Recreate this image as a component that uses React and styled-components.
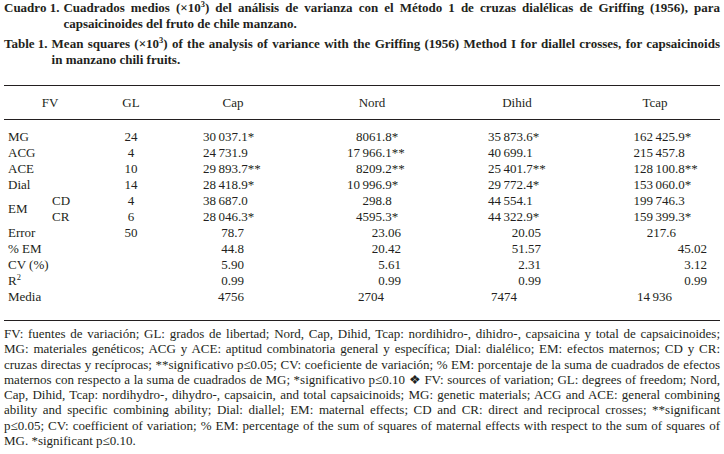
import React from "react";
import styled, { createGlobalStyle } from "styled-components";

const Global = createGlobalStyle`
  html, body { margin: 0; padding: 0; background: #fff; }
  body { font-family: "Liberation Serif", "DejaVu Serif", serif; color: #231f20; }
`;

const Page = styled.div`
  width: 724px;
  height: 454px;
  padding: 0 4px;
  box-sizing: border-box;
  overflow: hidden;
`;

const Caption = styled.div`
  display: flex;
  gap: 4px;
  font-weight: bold;
  font-size: 13px;
  line-height: 15.5px;
  margin-bottom: ${(p) => p.$mb}px;
`;

const CapLabel = styled.span`
  flex: none;
`;

const CapText = styled.div`
  flex: 1;
`;

const Line = styled.div`
  text-align: ${(p) => (p.$last ? "left" : "justify")};
  text-align-last: ${(p) => (p.$last ? "left" : "justify")};
`;

const Sup = styled.sup`
  font-size: 0.65em;
  vertical-align: 0.55em;
  line-height: 0;
`;

const Table = styled.div`
  margin-top: 18px;
  border-top: 1px solid #231f20;
  border-bottom: 1px solid #231f20;
  font-size: 13px;
`;

const Grid = styled.div`
  display: grid;
  grid-template-columns: 48px 44px 70px 134px 144px 146px 130px;
  grid-auto-rows: 16px;
  line-height: 16px;
`;

const Head = styled(Grid)`
  grid-auto-rows: 33px;
  line-height: 33px;
  border-bottom: 1px solid #231f20;
`;

const Body = styled(Grid)`
  padding: 9px 0 15px;
`;

const HeadCell = styled.div`
  text-align: center;
  grid-column: span ${(p) => p.$span || 1};
`;

const Label = styled.div`
  padding-left: 4px;
  white-space: nowrap;
  grid-column: span ${(p) => p.$span || 1};
  grid-row: span ${(p) => p.$rows || 1};
  align-self: center;
`;

const Sub = styled.div`
  padding-left: 0;
`;

const Center = styled.div`
  text-align: center;
`;

const DecCell = styled.div`
  white-space: nowrap;
`;

const Int = styled.span`
  display: inline-block;
  width: ${(p) => p.$w}px;
  text-align: right;
`;

const RightCell = styled.div`
  text-align: right;
  padding-right: ${(p) => p.$pr}px;
  white-space: nowrap;
`;

const Notes = styled.div`
  font-size: 13px;
  line-height: 15.3px;
  padding-top: 5px;
`;

const cols = [
  { name: "Cap", dec: 72, stat: 56, media: 56 },
  { name: "Nord", dec: 82, stat: 43, media: 60 },
  { name: "Dihid", dec: 79, stat: 49, media: 73 },
  { name: "Tcap", dec: 85, stat: [44, 13, 13, 13], media: 48 },
];

const T = "\u2009";

const rows = [
  { fv: "MG", gl: "24", v: [`30${T}037.1*`, "8061.8*", `35${T}873.6*`, `162${T}425.9*`] },
  { fv: "ACG", gl: "4", v: [`24${T}731.9`, `17${T}966.1**`, `40${T}699.1`, `215${T}457.8`] },
  { fv: "ACE", gl: "10", v: [`29${T}893.7**`, "8209.2**", `25${T}401.7**`, `128${T}100.8**`] },
  { fv: "Dial", gl: "14", v: [`28${T}418.9*`, `10${T}996.9*`, `29${T}772.4*`, `153${T}060.0*`] },
  { fv: "EM", sub: "CD", gl: "4", v: [`38${T}687.0`, "298.8", `44${T}554.1`, `199${T}746.3`] },
  { sub: "CR", gl: "6", v: [`28${T}046.3*`, "4595.3*", `44${T}322.9*`, `159${T}399.3*`] },
  { fv: "Error", gl: "50", kind: "stat", si: 0, v: ["78.7", "23.06", "20.05", "217.6"] },
  { fv: "% EM", kind: "stat", si: 1, v: ["44.8", "20.42", "51.57", "45.02"] },
  { fv: "CV (%)", kind: "stat", si: 2, v: ["5.90", "5.61", "2.31", "3.12"] },
  { fv: <>R<Sup>2</Sup></>, kind: "stat", si: 3, v: ["0.99", "0.99", "0.99", "0.99"] },
  { fv: "Media", kind: "media", v: ["4756", "2704", "7474", `14${T}936`] },
];

const Value = ({ row, col, text }) => {
  if (row.kind === "stat") {
    const pr = Array.isArray(col.stat) ? col.stat[row.si] : col.stat;
    return <RightCell $pr={pr}>{text}</RightCell>;
  }
  if (row.kind === "media") return <RightCell $pr={col.media}>{text}</RightCell>;
  const i = text.indexOf(".");
  return (
    <DecCell>
      <Int $w={col.dec}>{text.slice(0, i)}</Int>
      {text.slice(i)}
    </DecCell>
  );
};

const notes = [
  "FV: fuentes de variación; GL: grados de libertad; Nord, Cap, Dihid, Tcap: nordihidro-, dihidro-, capsaicina y total de capsaicinoides;",
  "MG: materiales genéticos; ACG y ACE: aptitud combinatoria general y específica; Dial: dialélico; EM: efectos maternos; CD y CR:",
  "cruzas directas y recíprocas; **significativo p\u22640.05; CV: coeficiente de variación; % EM: porcentaje de la suma de cuadrados de efectos",
  "maternos con respecto a la suma de cuadrados de MG; *significativo p\u22640.10 \u2756 FV: sources of variation; GL: degrees of freedom; Nord,",
  "Cap, Dihid, Tcap: nordihydro-, dihydro-, capsaicin, and total capsaicinoids; MG: genetic materials; ACG and ACE: general combining",
  "ability and specific combining ability; Dial: diallel; EM: maternal effects; CD and CR: direct and reciprocal crosses; **significant",
  "p\u22640.05; CV: coefficient of variation; % EM: percentage of the sum of squares of maternal effects with respect to the sum of squares of",
  "MG. *significant p\u22640.10.",
];

export default function App() {
  return (
    <Page>
      <Global />
      <Caption $mb={5}>
        <CapLabel>Cuadro 1.</CapLabel>
        <CapText>
          <Line>
            Cuadrados medios (×10<Sup>3</Sup>) del análisis de varianza con el Método 1 de cruzas dialélicas de Griffing (1956), para
          </Line>
          <Line $last>capsaicinoides del fruto de chile manzano.</Line>
        </CapText>
      </Caption>
      <Caption $mb={0}>
        <CapLabel>Table 1.</CapLabel>
        <CapText>
          <Line>
            Mean squares (×10<Sup>3</Sup>) of the analysis of variance with the Griffing (1956) Method I for diallel crosses, for capsaicinoids
          </Line>
          <Line $last>in manzano chili fruits.</Line>
        </CapText>
      </Caption>

      <Table>
        <Head>
          <HeadCell $span={2}>FV</HeadCell>
          <HeadCell>GL</HeadCell>
          {cols.map((c) => (
            <HeadCell key={c.name}>{c.name}</HeadCell>
          ))}
        </Head>
        <Body>
          {rows.map((r, ri) => (
            <React.Fragment key={ri}>
              {r.fv && (
                <Label $span={r.sub ? 1 : 2} $rows={r.sub ? 2 : 1}>
                  {r.fv}
                </Label>
              )}
              {r.sub && <Sub>{r.sub}</Sub>}
              <Center>{r.gl || ""}</Center>
              {cols.map((c, ci) => (
                <Value key={c.name} row={r} col={c} text={r.v[ci]} />
              ))}
            </React.Fragment>
          ))}
        </Body>
      </Table>

      <Notes>
        {notes.map((n, i) => (
          <Line key={i} $last={i === notes.length - 1}>
            {n}
          </Line>
        ))}
      </Notes>
    </Page>
  );
}
